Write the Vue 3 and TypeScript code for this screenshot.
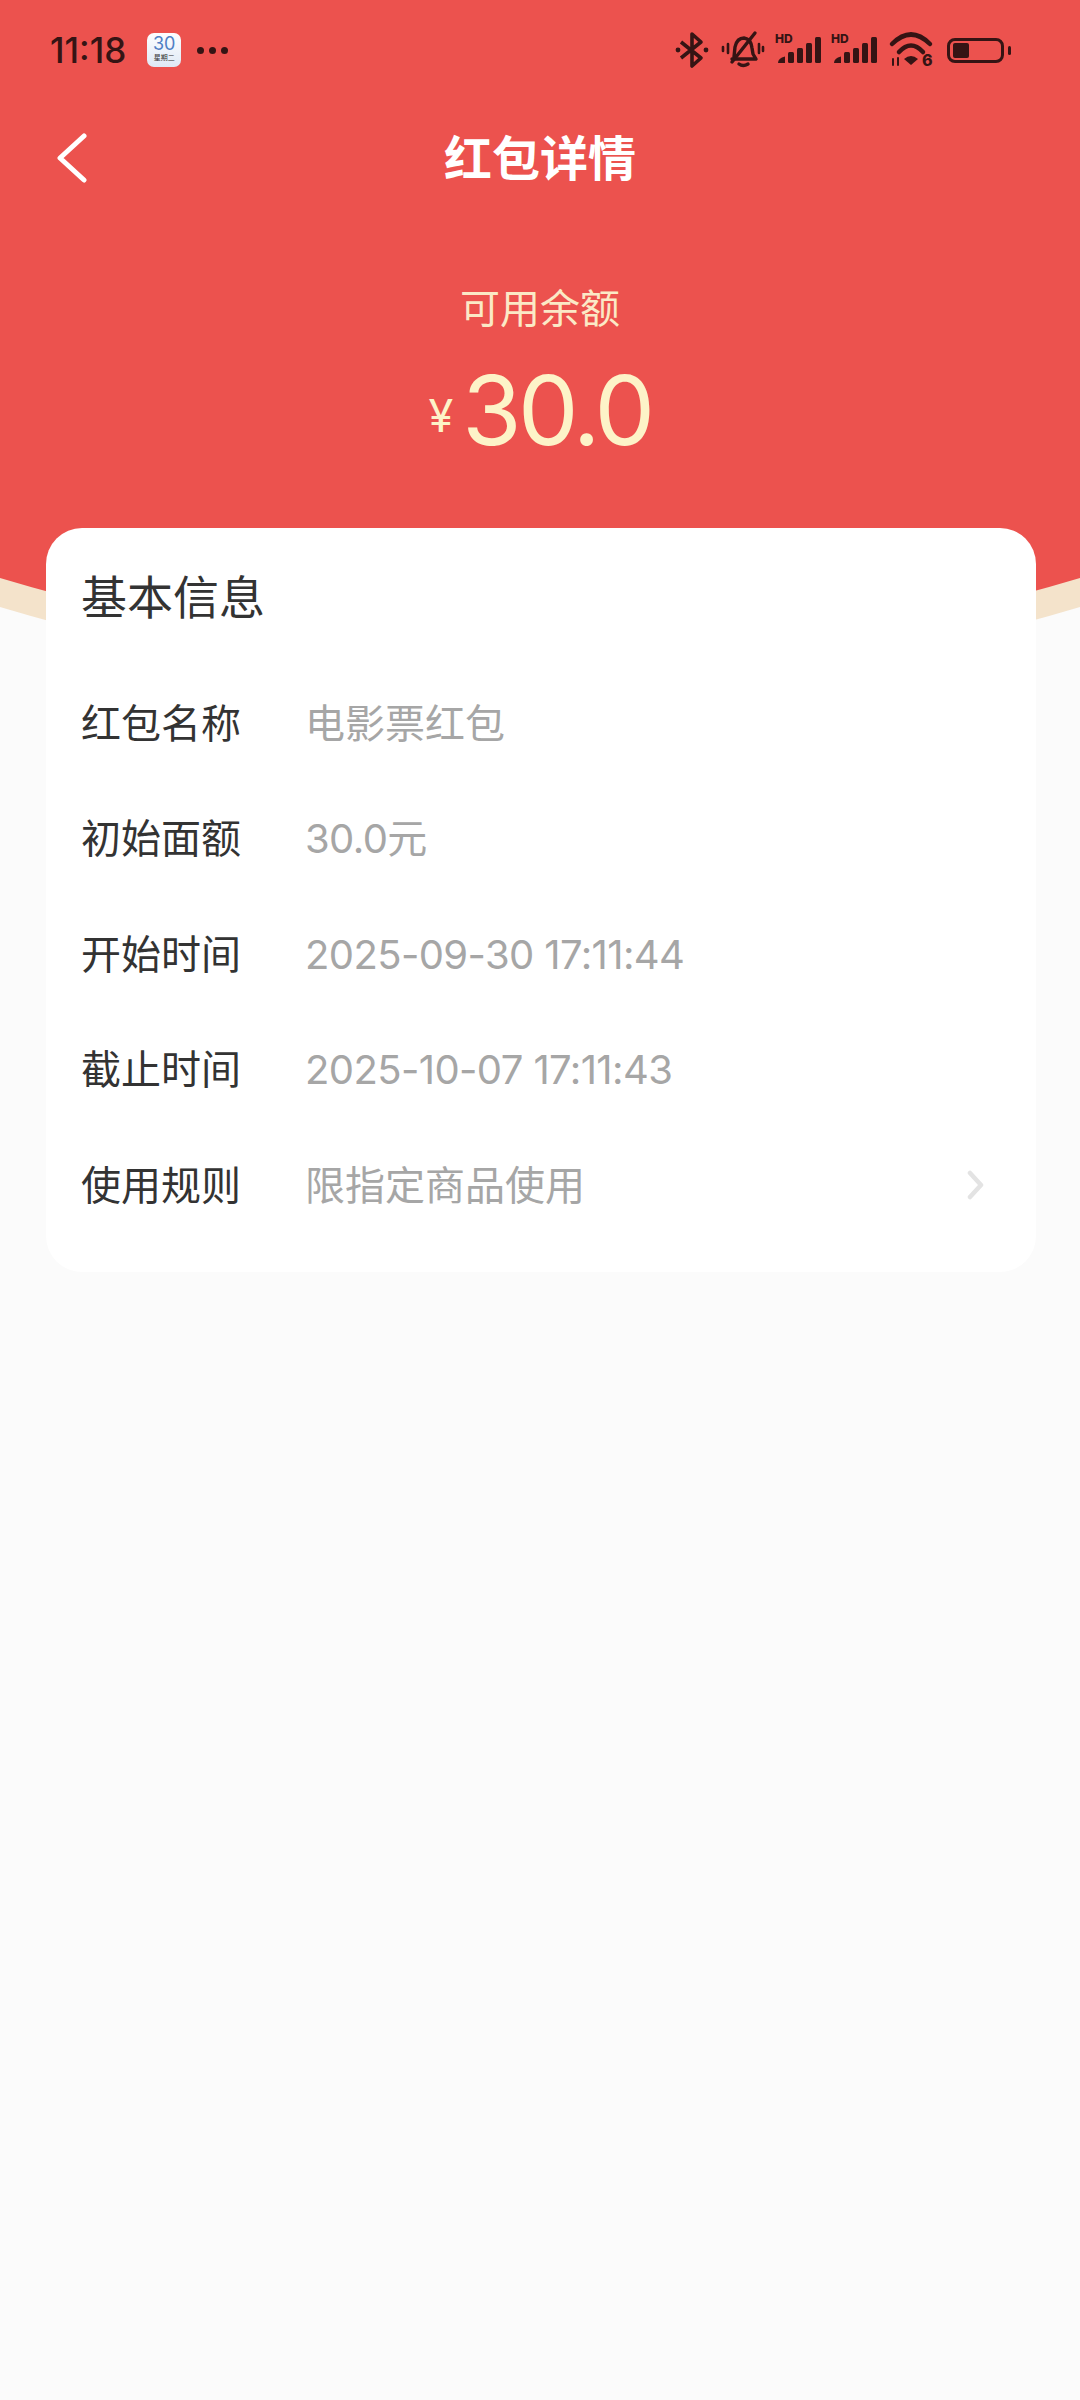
<template>
  <div class="page">
    <svg class="backdrop" width="1080" height="640" viewBox="0 0 1080 640">
      <path d="M0 607 Q540 769 1080 607 L1080 0 L0 0 Z" fill="#f4e3cb" />
      <path d="M0 578 Q540 740 1080 578 L1080 0 L0 0 Z" fill="#ec524e" />
    </svg>

    <div class="status-bar">
      <span class="time">11:18</span>
      <div class="cal">
        <span class="cal-day">30</span>
        <span class="cal-week">星期二</span>
      </div>
      <div class="dots"><i></i><i></i><i></i></div>
      <div class="status-icons">
        <svg width="34" height="38" viewBox="0 0 34 38" fill="none" stroke="#351414" stroke-width="3.6" stroke-linejoin="round">
          <path d="M6 11 L26 27 L17 35 L17 3 L26 11 L6 27" />
          <circle cx="3" cy="19" r="2.4" fill="#351414" stroke="none" />
          <circle cx="31" cy="19" r="2.4" fill="#351414" stroke="none" />
        </svg>
        <svg class="bell" width="42" height="38" viewBox="0 0 42 38" fill="none" stroke="#351414" stroke-width="3.4" stroke-linecap="round" stroke-linejoin="round">
          <path d="M12 26 L13 16 Q15 7 22 7 Q29 8 30 17 L31 23 L34 28 L10 28" />
          <path d="M17 33 Q21 36 26 33" />
          <path d="M33 2 L10 31" />
          <path d="M6 13 V22 M1 16 V20 M37 13 V22 M41 16 V20" stroke-width="2.6" />
        </svg>
        <svg v-for="n in 2" :key="n" class="signal" width="47" height="32" viewBox="0 0 47 32">
          <text x="0" y="9" class="hd">HD</text>
          <g fill="#351414">
            <path d="M3 29 Q3 24 10 22.5 V29 Z" />
            <rect x="13" y="18" width="6" height="11" rx="1.5" />
            <rect x="22" y="14" width="6" height="15" rx="1.5" />
            <rect x="31" y="9" width="6" height="20" rx="1.5" />
            <rect x="40" y="3" width="6" height="26" rx="1.5" />
          </g>
        </svg>
        <svg class="wifi" width="46" height="36" viewBox="0 0 46 36" fill="none" stroke="#351414" stroke-width="4.5" stroke-linecap="round">
          <path d="M3 12 Q22 -7 41 12" />
          <path d="M10 20 Q22 7 34 20" />
          <path d="M15 27 L22 33 L29 27 Q22 21 15 27 Z" fill="#351414" stroke="none" />
          <path d="M4 27 V33 M9 26 V33" stroke-width="2" />
          <text x="33" y="34" class="wifi-six">6</text>
        </svg>
        <div class="battery">
          <div class="battery-body"><div class="battery-fill"></div></div>
          <div class="battery-nub"></div>
        </div>
      </div>
    </div>

    <div class="nav">
      <svg class="back" width="30" height="50" viewBox="0 0 30 50" fill="none" stroke="#fff" stroke-width="5" stroke-linecap="round" stroke-linejoin="round">
        <path d="M27 3 L3 25 L27 47" />
      </svg>
      <h1>红包详情</h1>
    </div>

    <div class="balance">
      <div class="balance-label">可用余额</div>
      <div class="balance-amount"><span class="yen">¥</span><span class="num">30.0</span></div>
    </div>

    <div class="card">
      <div class="card-title">基本信息</div>
      <div v-for="row in rows" :key="row.label" class="row">
        <span class="label">{{ row.label }}</span>
        <span class="value" :class="{ digits: /\d/.test(row.value) }">{{ row.value }}</span>
        <svg v-if="row.more" class="chev" width="20" height="30" viewBox="0 0 20 30" fill="none" stroke="#e3e3e3" stroke-width="4.5" stroke-linecap="round" stroke-linejoin="round">
          <path d="M4 3 L15 15 L4 27" />
        </svg>
      </div>
    </div>
  </div>
</template>

<script setup lang="ts">
interface InfoRow {
  label: string;
  value: string;
  more?: boolean;
}

const rows: InfoRow[] = [
  { label: "红包名称", value: "电影票红包" },
  { label: "初始面额", value: "30.0元" },
  { label: "开始时间", value: "2025-09-30 17:11:44" },
  { label: "截止时间", value: "2025-10-07 17:11:43" },
  { label: "使用规则", value: "限指定商品使用", more: true },
];
</script>

<style>
html,
body {
  margin: 0;
  background: #fbfbfb;
}
</style>

<style scoped>
.page {
  position: relative;
  width: 1080px;
  height: 2400px;
  overflow: hidden;
  background: #fbfbfb;
  font-family: "Inter", "Noto Sans CJK SC", sans-serif;
}

.backdrop {
  position: absolute;
  top: 0;
  left: 0;
}

.status-bar,
.nav,
.balance,
.card {
  position: relative;
}

.status-bar {
  height: 100px;
  box-sizing: border-box;
  padding: 0 69px 0 50px;
  display: flex;
  align-items: center;
  color: #351414;
}

.time {
  font-size: 35px;
  font-weight: 500;
}

.cal {
  width: 34px;
  height: 34px;
  margin-left: 21px;
  border-radius: 7px;
  background: linear-gradient(#fdfeff, #dfe9f5);
  display: flex;
  flex-direction: column;
  align-items: center;
  overflow: hidden;
}

.cal-day {
  font-size: 18px;
  line-height: 21px;
  color: #4f7fc4;
}

.cal-week {
  font-size: 7px;
  line-height: 8px;
  color: #333;
  white-space: nowrap;
}

.dots {
  display: flex;
  gap: 5px;
  margin-left: 16px;
}

.dots i {
  width: 7px;
  height: 7px;
  border-radius: 50%;
  background: #351414;
}

.status-icons {
  margin-left: auto;
  display: flex;
  align-items: center;
  gap: 11px;
}

.status-icons svg {
  overflow: visible;
}

.bell {
  margin-left: 2px;
}

.signal + .signal {
  margin-left: -2px;
}

.hd {
  font-family: "Inter", sans-serif;
  font-size: 12px;
  font-weight: 800;
  fill: #351414;
}

.wifi-six {
  font-family: "Inter", sans-serif;
  font-size: 16px;
  font-weight: 800;
  fill: #351414;
  stroke: none;
}

.battery {
  display: flex;
  align-items: center;
  gap: 4px;
  margin-left: 1px;
}

.battery-body {
  width: 57px;
  height: 25px;
  box-sizing: border-box;
  border: 3px solid #351414;
  border-radius: 8px;
  padding: 2px 3px;
}

.battery-fill {
  width: 16px;
  height: 100%;
  background: #351414;
  border-radius: 2px;
}

.battery-nub {
  width: 3px;
  height: 9px;
  border-radius: 2px;
  background: #351414;
}

.nav {
  height: 110px;
  display: flex;
  align-items: center;
  justify-content: center;
}

.back {
  position: absolute;
  left: 57px;
  top: 33px;
}

.nav h1 {
  margin: 0;
  font-size: 48px;
  font-weight: 700;
  color: #fff;
}

.balance {
  margin-top: 74px;
  display: flex;
  flex-direction: column;
  align-items: center;
  color: #fdf3c8;
}

.balance-label {
  font-size: 40px;
  line-height: 50px;
  color: #fbe9c6;
}

.balance-amount {
  margin-top: 12px;
  display: flex;
  align-items: center;
  line-height: 116px;
}

.yen {
  font-size: 45px;
  margin-right: 9px;
  margin-top: 12px;
}

.num {
  font-size: 96px;
  font-weight: 400;
  letter-spacing: -3.5px;
}

.card {
  position: absolute;
  top: 528px;
  left: 46px;
  width: 990px;
  height: 744px;
  box-sizing: border-box;
  padding: 36px 36px 0 35px;
  background: #fff;
  border-radius: 36px;
}

.card-title {
  font-size: 46px;
  line-height: 66px;
  color: #333;
  margin-bottom: 36px;
}

.row {
  height: 115.4px;
  display: flex;
  align-items: baseline;
  line-height: 115.4px;
  font-size: 40px;
}

.label {
  width: 224px;
  flex: none;
  color: #333;
}

.value {
  color: #a6a6a6;
}

.value.digits {
  letter-spacing: -0.6px;
}

.chev {
  align-self: center;
  margin-left: auto;
  margin-right: 14px;
}
</style>
